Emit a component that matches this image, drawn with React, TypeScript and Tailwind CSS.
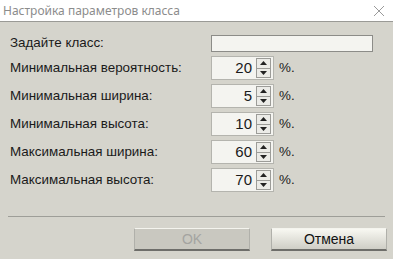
export default function App() {
  const rows = [
    { label: 'Минимальная вероятность:', value: '20' },
    { label: 'Минимальная ширина:', value: '5' },
    { label: 'Минимальная высота:', value: '10' },
    { label: 'Максимальная ширина:', value: '60' },
    { label: 'Максимальная высота:', value: '70' },
  ]

  return (
    <div className="w-[393px] h-[259px] flex flex-col bg-[#d5d4cc] overflow-hidden" style={{ fontFamily: '"Liberation Sans", Arial, sans-serif' }}>
      {/* Title bar */}
      <div className="h-[22px] bg-white border-b border-[#9a9a96] flex items-center justify-between pl-[3px] pr-[8px]">
        <span className="text-[12px] text-[#8c8c8c]" style={{ fontFamily: '"Noto Sans", sans-serif' }}>
          Настройка параметров класса
        </span>
        <svg width="12" height="12" viewBox="0 0 12 12" className="mt-[1px]">
          <path d="M1 1 L11 11 M11 1 L1 11" stroke="#9a9a9a" strokeWidth="1" />
        </svg>
      </div>

      {/* Form */}
      <div className="flex flex-col pl-[10px] pt-[13px] text-[13.4px] text-[#1a1a1a]">
        <div className="flex items-center h-[17px]">
          <span className="w-[201px]">Задайте класс:</span>
          <div className="w-[162px] h-[17px] bg-[#f4f4f0] border border-[#8c8c88]" />
        </div>
        <div className="flex flex-col gap-[4px] mt-[4px]">
          {rows.map((row, i) => (
            <div key={i} className="flex items-center h-[24px]">
              <span className="w-[201px]">{row.label}</span>
              <div className="w-[63px] h-[24px] bg-[#f4f4f0] border border-[#b4b4ae] flex items-center justify-end pr-[2px]">
                <span className="mr-[4px] text-[15px]">{row.value}</span>
                <div className="w-[15px] h-[20px] border border-[#9c9c98] bg-[#ebebe7] flex flex-col">
                  <div className="flex-1 flex items-center justify-center border-b border-[#9c9c98]">
                    <svg width="7" height="4" viewBox="0 0 7 4"><path d="M0 4 L3.5 0 L7 4 Z" fill="#222" /></svg>
                  </div>
                  <div className="flex-1 flex items-center justify-center">
                    <svg width="7" height="4" viewBox="0 0 7 4"><path d="M0 0 L3.5 4 L7 0 Z" fill="#222" /></svg>
                  </div>
                </div>
              </div>
              <span className="ml-[5px]">%.</span>
            </div>
          ))}
        </div>
      </div>

      {/* Separator */}
      <div className="mx-[8px] mt-[24px] border-t border-[#9e9e98]" />

      {/* Buttons */}
      <div className="flex justify-end gap-[21px] pr-[6px] mt-[11px]">
        <button className="w-[116px] h-[23px] text-[14px] text-[#a4a4a0] bg-[#c9c8c0] border-t border-t-[#f4f4ee] border-b-2 border-b-[#6e6e6a] border-x border-x-[#b0b0aa]">
          OK
        </button>
        <button className="w-[116px] h-[23px] text-[14px] text-[#111] bg-gradient-to-b from-[#f8f8f2] to-[#cfcec6] border-t border-t-[#f4f4ee] border-b-2 border-b-[#6e6e6a] border-x border-x-[#b0b0aa]">
          Отмена
        </button>
      </div>
    </div>
  )
}
